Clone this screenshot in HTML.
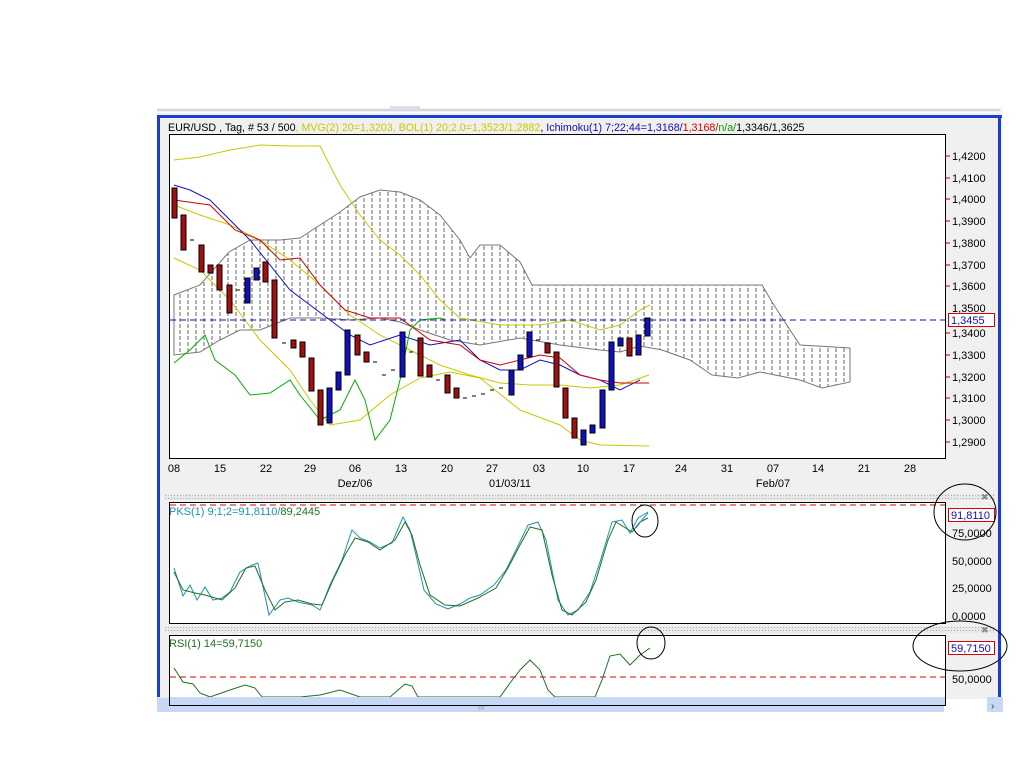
<!DOCTYPE html><html><head><meta charset="utf-8"><style>
body{margin:0;width:1024px;height:768px;background:#fff;overflow:hidden;font-family:"Liberation Sans",sans-serif;}
svg{position:absolute;left:0;top:0}
text{font-family:"Liberation Sans",sans-serif;font-size:11px}
</style></head><body>
<svg width="1024" height="768" viewBox="0 0 1024 768">
<defs>
<pattern id="hatch" width="8" height="6" patternUnits="userSpaceOnUse"><line x1="4" y1="0" x2="4" y2="4" stroke="#666" stroke-width="1"/></pattern>
<pattern id="dots" width="3" height="3" patternUnits="userSpaceOnUse"><rect width="3" height="3" fill="#e8e8e8"/><rect width="1" height="1" fill="#aaa"/></pattern>
</defs>
<rect x="157" y="108" width="845" height="4" fill="#f0f0f0"/>
<line x1="157" y1="110" x2="1000" y2="110" stroke="#bbb"/>
<rect x="390" y="106" width="30" height="4" fill="#dde" />
<rect x="157" y="113" width="845" height="586" fill="#f0f0f0"/>
<rect x="157" y="115" width="3" height="584" fill="#1a3fd0"/>
<rect x="157" y="115" width="845" height="3" fill="#1a3fd0"/>
<rect x="998" y="115" width="3" height="584" fill="#1a3fd0"/>
<rect x="157" y="697" width="787" height="15" fill="#c8d8f4"/>
<rect x="157" y="697" width="787" height="1" fill="#e0e8fa"/>
<rect x="987" y="697" width="16" height="15" fill="#c8d8f4"/>
<text x="991" y="709" fill="#335" style="font-size:10px">›</text>
<text x="478" y="708" fill="#889" style="font-size:8px">|||</text>
<text x="168" y="131" style="font-size:10.7px"><tspan fill="#000">EUR/USD , Tag, # 53 / 500</tspan><tspan fill="#c8c800">, MVG(2) 20=1,3203, BOL(1) 20;2.0=1,3523/1,2882</tspan><tspan fill="#000">, </tspan><tspan fill="#1010b0">Ichimoku(1) 7;22;44=1,3168/</tspan><tspan fill="#d00000">1,3168/</tspan><tspan fill="#00a000">n/a/</tspan><tspan fill="#000">1,3346/1,3625</tspan></text>
<rect x="169.5" y="134.5" width="776" height="324" fill="#fff" stroke="#000"/>
<g fill="#000">
<text x="952" y="160">1,4200</text><text x="952" y="182">1,4100</text><text x="952" y="203">1,4000</text><text x="952" y="225">1,3900</text><text x="952" y="247">1,3800</text><text x="952" y="269">1,3700</text><text x="952" y="290">1,3600</text><text x="952" y="312">1,3500</text><text x="952" y="337">1,3400</text><text x="952" y="359">1,3300</text><text x="952" y="381">1,3200</text><text x="952" y="402">1,3100</text><text x="952" y="424">1,3000</text><text x="952" y="446">1,2900</text>
</g>
<g stroke="#a00" stroke-width="1">
<line x1="945" y1="156" x2="950" y2="156"/><line x1="945" y1="178" x2="950" y2="178"/><line x1="945" y1="199" x2="950" y2="199"/><line x1="945" y1="221" x2="950" y2="221"/><line x1="945" y1="243" x2="950" y2="243"/><line x1="945" y1="265" x2="950" y2="265"/><line x1="945" y1="286" x2="950" y2="286"/><line x1="945" y1="333" x2="950" y2="333"/><line x1="945" y1="355" x2="950" y2="355"/><line x1="945" y1="377" x2="950" y2="377"/><line x1="945" y1="398" x2="950" y2="398"/><line x1="945" y1="420" x2="950" y2="420"/><line x1="945" y1="442" x2="950" y2="442"/>
</g>
<rect x="948.5" y="313.5" width="46" height="13" fill="#fff" stroke="#d00"/>
<text x="951" y="324" fill="#1010b0">1,3455</text>
<g fill="#000" text-anchor="middle">
<text x="174" y="472">08</text><text x="220" y="472">15</text><text x="266" y="472">22</text><text x="310" y="472">29</text><text x="355" y="472">06</text><text x="401" y="472">13</text><text x="447" y="472">20</text><text x="492" y="472">27</text><text x="539" y="472">03</text><text x="583" y="472">10</text><text x="629" y="472">17</text><text x="681" y="472">24</text><text x="727" y="472">31</text><text x="773" y="472">07</text><text x="818" y="472">14</text><text x="864" y="472">21</text><text x="910" y="472">28</text>
<text x="355" y="487">Dez/06</text><text x="510" y="487">01/03/11</text><text x="773" y="487">Feb/07</text>
</g>
<polygon points="174,295 200,285 229,252 250,240 280,240 300,238 320,225 340,212 360,197 380,190 400,192 420,200 440,215 460,240 470,258 480,245 500,245 520,262 532,285 762,285 772,302 790,330 800,345 850,348 850,382 822,388 800,380 760,372 738,378 712,375 690,360 662,350 640,346 620,352 600,350 560,345 520,338 480,345 450,340 420,330 400,322 380,318 350,320 320,318 290,318 260,330 240,330 220,340 200,352 174,355" fill="url(#hatch)" stroke="#777" stroke-width="1"/>
<g fill="none" stroke-width="1">
<polyline stroke="#c8c800" points="174,160 200,157 230,150 260,145 290,146 320,146 340,185 360,215 380,240 400,255 420,275 440,300 460,318 500,325 540,325 570,320 600,330 620,325 640,310 650,305"/>
<polyline stroke="#c8c800" points="174,258 200,270 230,300 260,340 290,370 310,400 330,425 360,420 390,395 420,378 450,372 480,378 520,410 560,425 580,440 600,445 649,446"/>
<polyline stroke="#c8c800" points="174,205 200,215 230,225 260,240 290,260 320,285 350,315 380,335 410,350 440,365 470,375 500,383 530,385 560,385 590,388 620,385 649,375"/>
<polyline stroke="#1010c0" points="174,185 190,190 210,200 235,225 250,240 270,265 290,290 310,305 330,320 350,335 370,345 400,335 430,345 460,340 480,360 500,370 520,370 540,360 560,365 580,375 600,380 620,390 640,380"/>
<polyline stroke="#d00000" points="174,200 210,205 235,230 260,240 280,260 300,258 320,285 345,310 370,318 400,318 430,340 460,345 480,360 500,365 540,355 560,358 580,375 600,380 620,383 649,383"/>
<polyline stroke="#00b000" points="174,363 190,350 205,335 215,360 235,375 250,395 270,393 290,380 300,395 320,420 340,410 355,380 365,400 375,440 390,420 400,380 410,330 420,320 440,318 445,320"/>
</g>
<line x1="170" y1="320" x2="945" y2="320" stroke="#1010b0" stroke-dasharray="6,4"/>
<g stroke="#000" stroke-width="1">
<g fill="#a01010">
<rect x="172" y="188" width="5" height="30"/><rect x="181" y="215" width="5" height="35"/><rect x="199" y="245" width="5" height="27"/><rect x="208" y="265" width="5" height="8"/><rect x="217" y="265" width="5" height="25"/><rect x="227" y="285" width="5" height="28"/><rect x="263" y="262" width="5" height="20"/><rect x="272" y="280" width="5" height="58"/><rect x="291" y="340" width="5" height="8"/><rect x="300" y="342" width="5" height="15"/><rect x="309" y="358" width="5" height="33"/><rect x="318" y="390" width="5" height="35"/><rect x="355" y="335" width="5" height="20"/><rect x="364" y="352" width="5" height="10"/><rect x="418" y="338" width="5" height="38"/><rect x="427" y="365" width="5" height="12"/><rect x="445" y="375" width="5" height="18"/><rect x="454" y="388" width="5" height="10"/><rect x="545" y="343" width="5" height="10"/><rect x="554" y="352" width="5" height="35"/><rect x="563" y="388" width="5" height="30"/><rect x="572" y="418" width="5" height="20"/><rect x="627" y="338" width="5" height="18"/></g>
<g fill="#1010c0"><rect x="245" y="278" width="5" height="25"/><rect x="254" y="268" width="5" height="12"/><rect x="327" y="388" width="5" height="35"/><rect x="336" y="372" width="5" height="18"/><rect x="345" y="330" width="5" height="45"/><rect x="400" y="332" width="5" height="45"/><rect x="509" y="370" width="5" height="25"/><rect x="518" y="355" width="5" height="15"/><rect x="527" y="332" width="5" height="25"/><rect x="581" y="430" width="5" height="15"/><rect x="590" y="425" width="5" height="8"/><rect x="600" y="390" width="5" height="38"/><rect x="609" y="342" width="5" height="48"/><rect x="618" y="338" width="5" height="8"/><rect x="636" y="335" width="5" height="20"/><rect x="645" y="318" width="5" height="18"/></g>
<g><line x1="190" y1="240" x2="194" y2="240"/><line x1="236" y1="290" x2="240" y2="290"/><line x1="282" y1="343" x2="286" y2="343"/><line x1="373" y1="362" x2="377" y2="362"/><line x1="382" y1="375" x2="386" y2="375"/><line x1="391" y1="370" x2="395" y2="370"/><line x1="409" y1="352" x2="413" y2="352"/><line x1="436" y1="380" x2="440" y2="380"/><line x1="463" y1="398" x2="467" y2="398"/><line x1="472" y1="396" x2="476" y2="396"/><line x1="481" y1="394" x2="485" y2="394"/><line x1="490" y1="390" x2="494" y2="390"/><line x1="499" y1="388" x2="503" y2="388"/><line x1="536" y1="340" x2="540" y2="340"/></g>
</g>
<rect x="165" y="494" width="830" height="6" fill="url(#dots)"/>
<rect x="165" y="627" width="830" height="6" fill="url(#dots)"/>
<text x="981" y="500" fill="#888" style="font-size:9px">✖</text><text x="981" y="633" fill="#888" style="font-size:9px">✖</text>
<rect x="169.5" y="502.5" width="776" height="121" fill="#fff" stroke="#000"/>
<line x1="170" y1="505" x2="945" y2="505" stroke="#d00" stroke-dasharray="6,4"/>
<text x="169" y="515"><tspan fill="#2090b0">PKS(1) 9;1;2=91,8110/</tspan><tspan fill="#207020">89,2445</tspan></text>
<g fill="#000"><text x="952" y="537">75,0000</text><text x="952" y="565">50,0000</text><text x="952" y="592">25,0000</text><text x="952" y="620">0,0000</text></g>
<rect x="948.5" y="508.5" width="46" height="13" fill="#fff" stroke="#d00"/><text x="951" y="519" fill="#1010b0">91,8110</text>
<polyline fill="none" stroke="#2090b0" points="174,568 183,596 190,585 197,600 205,587 213,600 222,598 230,592 240,572 252,565 258,563 269,615 280,600 288,598 298,602 312,605 320,610 330,585 342,560 352,530 360,538 370,542 380,548 392,543 403,517 410,530 416,555 424,590 436,604 448,609 460,604 470,598 480,595 494,585 506,570 516,550 528,525 538,522 546,540 558,600 568,615 578,610 590,592 600,562 612,522 622,520 630,533 638,518 648,512"/>
<polyline fill="none" stroke="#207020" points="174,572 183,590 195,593 205,595 222,600 235,588 246,568 255,566 265,590 275,610 285,602 298,600 312,604 322,605 333,580 345,555 355,538 368,542 380,550 395,540 405,522 412,535 420,565 430,595 445,605 460,606 478,598 496,588 508,568 520,545 530,527 542,530 552,575 562,610 572,615 586,602 596,580 608,540 616,522 632,532 640,522 648,518"/>
<rect x="169.5" y="635.5" width="776" height="70" fill="#fff" stroke="#000"/>
<line x1="170" y1="677" x2="945" y2="677" stroke="#d00" stroke-dasharray="6,4"/>
<text x="169" y="647" fill="#207020">RSI(1) 14=59,7150</text>
<text x="952" y="683" fill="#000">50,0000</text>
<rect x="948.5" y="641.5" width="46" height="13" fill="#fff" stroke="#d00"/><text x="951" y="652" fill="#1010b0">59,7150</text>
<polyline fill="none" stroke="#207020" points="174,668 183,682 193,684 200,693 210,697 230,690 245,685 255,688 262,697 280,697 300,697 320,695 340,690 360,697 390,697 398,690 405,684 412,686 418,697 480,697 500,697 510,683 520,670 530,660 540,670 548,690 555,697 595,697 602,680 610,656 620,654 630,665 640,655 650,648"/>
<rect x="170" y="697" width="775" height="8" fill="#c8d8f4"/>
<g fill="none" stroke="#000" stroke-width="1">
<ellipse cx="645" cy="521" rx="13" ry="16"/>
<ellipse cx="651" cy="643" rx="14" ry="16"/>
<ellipse cx="965" cy="512" rx="31" ry="28"/>
<ellipse cx="960" cy="646" rx="47" ry="25"/>
</g>
<polyline fill="none" stroke="#2090b0" points="636,528 642,520 648,513"/>
</svg>
</body></html>
